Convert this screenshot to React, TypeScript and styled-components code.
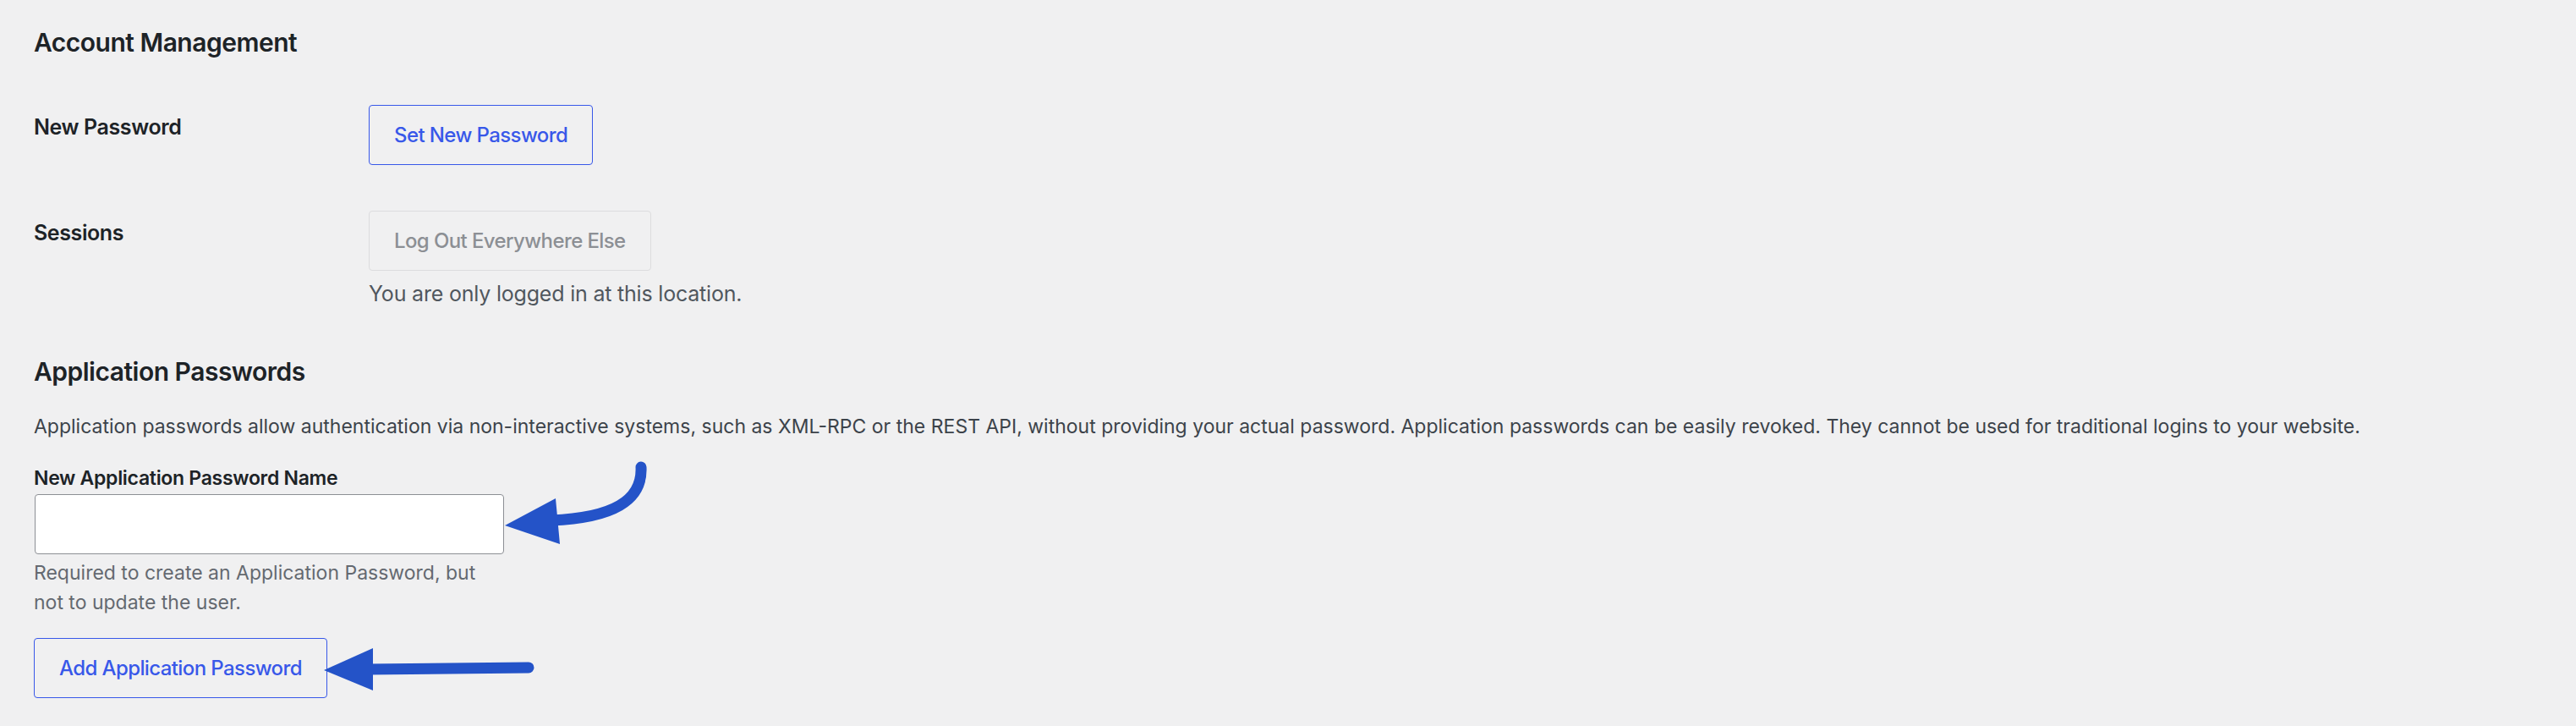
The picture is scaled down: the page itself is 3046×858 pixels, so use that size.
import React from "react";
import styled, { createGlobalStyle } from "styled-components";

const GlobalStyle = createGlobalStyle`
  html, body {
    margin: 0;
    padding: 0;
    background: #f0f0f1;
  }
  body {
    font-family: Inter, "Noto Sans", "Liberation Sans", sans-serif;
    color: #1d2327;
    -webkit-font-smoothing: antialiased;
  }
`;

const Page = styled.div`
  position: relative;
  width: 3046px;
  height: 858px;
  box-sizing: border-box;
  padding: 31px 40px 0;
  overflow: hidden;
`;

const Heading = styled.h2<{ $mt?: number }>`
  margin: ${(p) => p.$mt ?? 0}px 0 0;
  font-size: 30px;
  line-height: 39px;
  font-weight: 600;
  letter-spacing: -0.5px;
  color: #1d2327;
`;

const FormTable = styled.div`
  display: grid;
  grid-template-columns: 396px 1fr;
  margin-top: 27px;
`;

const RowLabel = styled.div`
  padding-top: 36px;
  font-size: 25px;
  line-height: 35px;
  font-weight: 600;
  letter-spacing: -0.4px;
  color: #1d2327;
`;

const RowField = styled.div`
  padding: 27px 0;
  display: flex;
  flex-direction: column;
  align-items: flex-start;
`;

const Button = styled.button<{ $disabled?: boolean }>`
  box-sizing: border-box;
  height: 71px;
  padding: 0 29px;
  display: inline-flex;
  align-items: center;
  font-family: inherit;
  font-size: 24px;
  font-weight: 500;
  letter-spacing: -0.6px;
  border-radius: 4px;
  background: #f0f0f1;
  cursor: ${(p) => (p.$disabled ? "default" : "pointer")};
  border: 1px solid ${(p) => (p.$disabled ? "#dcdcde" : "#3858e9")};
  color: ${(p) => (p.$disabled ? "#8c8f94" : "#3858e9")};
`;

const RowNote = styled.p`
  margin: 9px 0 0;
  font-size: 25px;
  line-height: 37px;
  letter-spacing: -0.2px;
  color: #50575e;
`;

const SectionText = styled.p`
  margin: 28px 0 0;
  font-size: 23px;
  line-height: 34px;
  color: #3c434a;
`;

const FieldLabel = styled.label`
  display: block;
  margin-top: 27px;
  font-size: 23px;
  line-height: 34px;
  font-weight: 600;
  letter-spacing: -0.3px;
  color: #1d2327;
`;

const TextInput = styled.input`
  display: block;
  box-sizing: border-box;
  margin: 2px 0 0 1px;
  width: 555px;
  height: 71px;
  padding: 0 14px;
  background: #fff;
  border: 1px solid #8c8f94;
  border-radius: 4px;
  font-family: inherit;
  font-size: 25px;
  outline: none;
`;

const HelpText = styled.p`
  margin: 5px 0 0;
  font-size: 23px;
  line-height: 35px;
  color: #646970;
`;

const ActionRow = styled.div`
  margin-top: 24px;
`;

const Annotations = styled.svg`
  position: absolute;
  top: 0;
  left: 0;
  pointer-events: none;
`;

const ARROW = "#2453c8";

export default function App() {
  return (
    <>
      <GlobalStyle />
      <Page>
        <Heading>Account Management</Heading>
        <FormTable>
          <RowLabel>New Password</RowLabel>
          <RowField>
            <Button type="button">Set New Password</Button>
          </RowField>
          <RowLabel>Sessions</RowLabel>
          <RowField>
            <Button type="button" $disabled disabled>
              Log Out Everywhere Else
            </Button>
            <RowNote>You are only logged in at this location.</RowNote>
          </RowField>
        </FormTable>

        <Heading $mt={27}>Application Passwords</Heading>
        <SectionText>
          Application passwords allow authentication via non-interactive systems, such as XML-RPC or the REST API, without
          providing your actual password. Application passwords can be easily revoked. They cannot be used for traditional
          logins to your website.
        </SectionText>
        <FieldLabel htmlFor="new_application_password_name">New Application Password Name</FieldLabel>
        <TextInput id="new_application_password_name" type="text" />
        <HelpText>
          Required to create an Application Password, but
          <br />
          not to update the user.
        </HelpText>
        <ActionRow>
          <Button type="button">Add Application Password</Button>
        </ActionRow>

        <Annotations width="3046" height="858" viewBox="0 0 3046 858">
          <path
            d="M758 552 C760 592, 724 612, 652 615"
            fill="none"
            stroke={ARROW}
            strokeWidth="13"
            strokeLinecap="round"
          />
          <polygon points="597,621 657,589 662,643" fill={ARROW} />
          <path d="M625 789 L436 791" fill="none" stroke={ARROW} strokeWidth="13" strokeLinecap="round" />
          <polygon points="383,792 441,766 441,816" fill={ARROW} />
        </Annotations>
      </Page>
    </>
  );
}
